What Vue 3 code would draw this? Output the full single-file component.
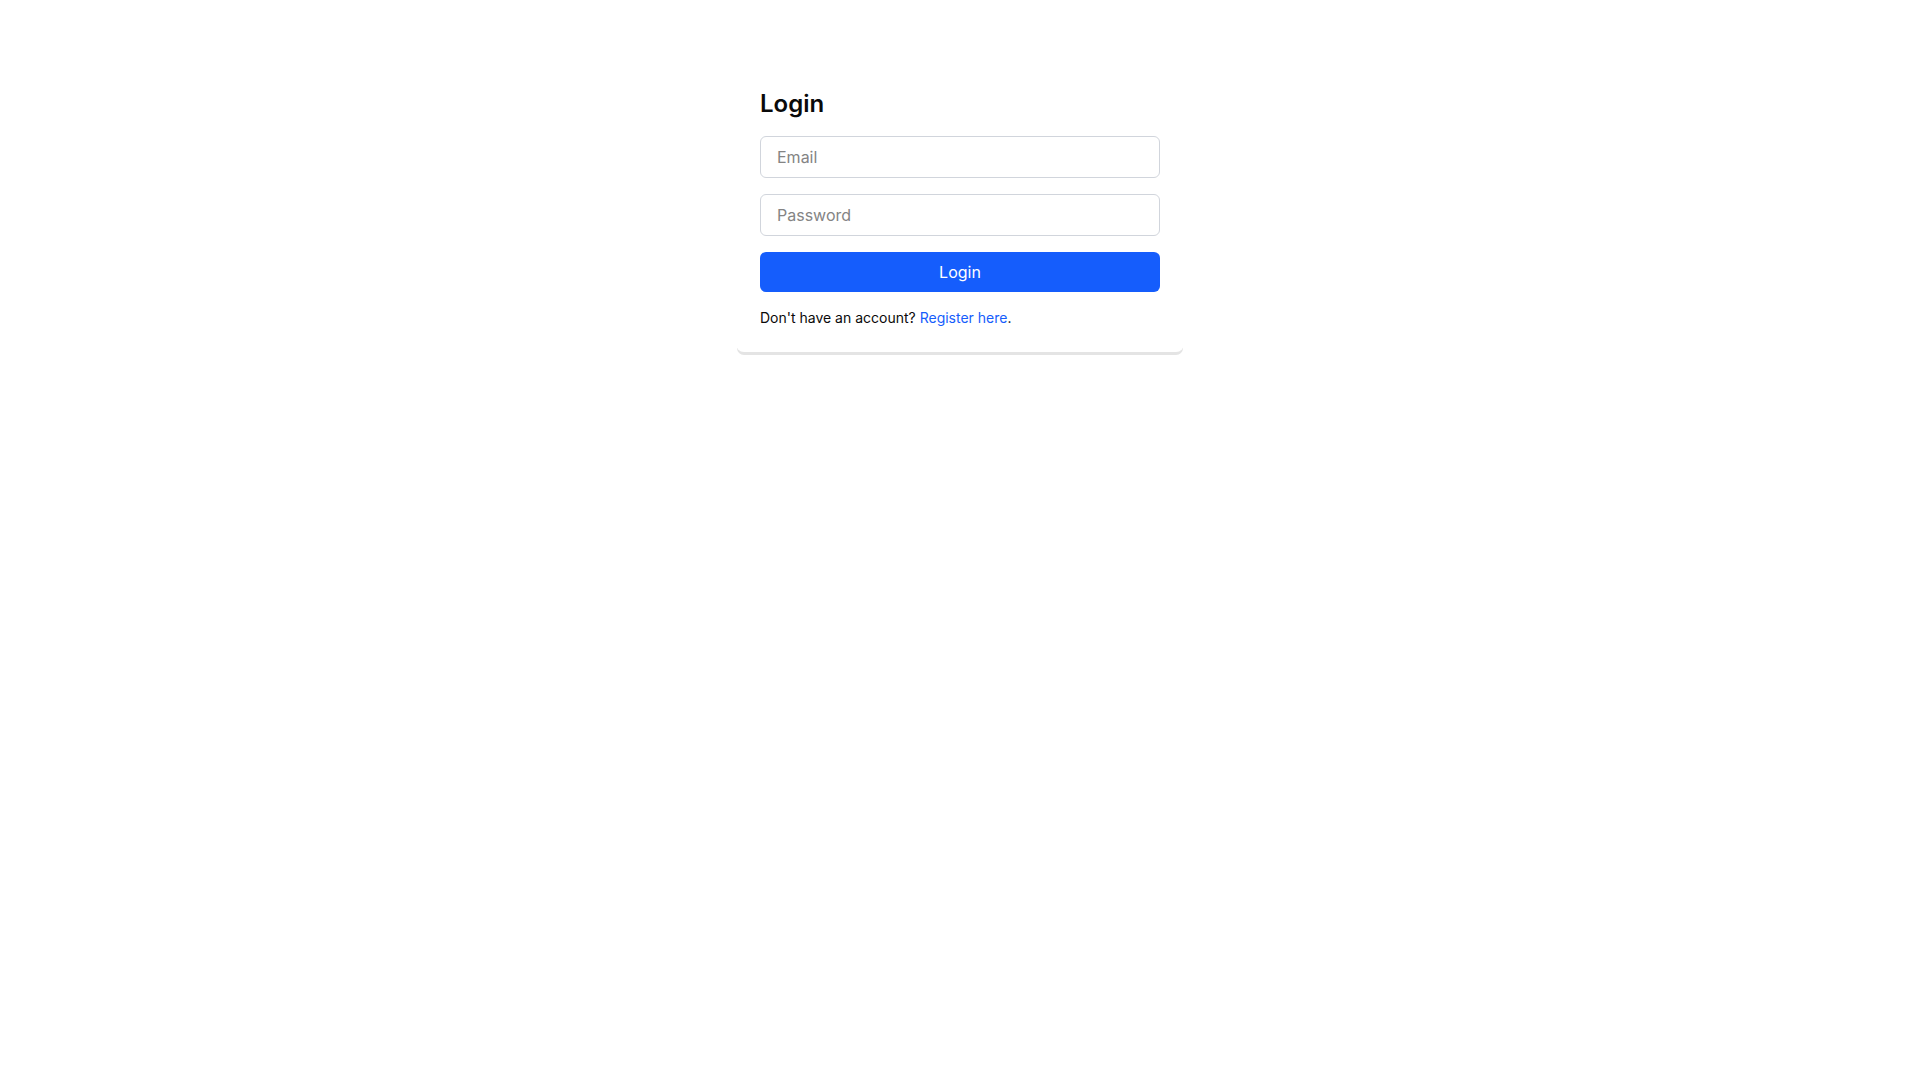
<template>
  <main class="page">
    <section class="login-card">
      <h1>Login</h1>

      <form class="login-form" @submit.prevent>
        <input
          v-model="email"
          type="email"
          placeholder="Email"
          aria-label="Email"
          required
        />

        <input
          v-model="password"
          type="password"
          placeholder="Password"
          aria-label="Password"
          required
        />

        <button type="submit">Login</button>
      </form>

      <p class="register-hint">
        Don't have an account? <a href="/register">Register here</a>.
      </p>
    </section>
  </main>
</template>

<script setup>
import { ref } from "vue";

const email = ref("");
const password = ref("");
</script>

<style>
body {
  background: #ffffff;
}
</style>

<style scoped>
.page {
  box-sizing: border-box;
  min-height: 100vh;
  padding-top: 64px;
  color: #0a0a0a;
  font-family: Inter, sans-serif;
  font-size: 16px;
  line-height: 24px;
}

.login-card {
  box-sizing: border-box;
  max-width: 448px;
  margin: 0 auto;
  padding: 24px;
  background: #ffffff;
  border-radius: 8px;
  box-shadow: 0 4px 0 -1px #e4e4e4;
}

h1 {
  margin: 0 0 16px;
  font-size: 24px;
  font-weight: 600;
  line-height: 32px;
}

.login-form {
  display: flex;
  flex-direction: column;
  gap: 16px;
}

input,
button {
  box-sizing: border-box;
  width: 100%;
  padding: 8px 16px;
  border-radius: 6px;
  font: inherit;
}

input {
  border: 1px solid #d1d5dc;
  background: transparent;
  color: inherit;
}

input::placeholder {
  color: #848484;
  opacity: 1;
}

button {
  border: 0;
  background: #155dfc;
  color: #ffffff;
  cursor: pointer;
}

button:hover {
  background: #1447e6;
}

.register-hint {
  margin: 16px 0 0;
  font-size: 14px;
  line-height: 20px;
}

.register-hint a {
  color: #155dfc;
  text-decoration: none;
}

.register-hint a:hover {
  text-decoration: underline;
}
</style>
